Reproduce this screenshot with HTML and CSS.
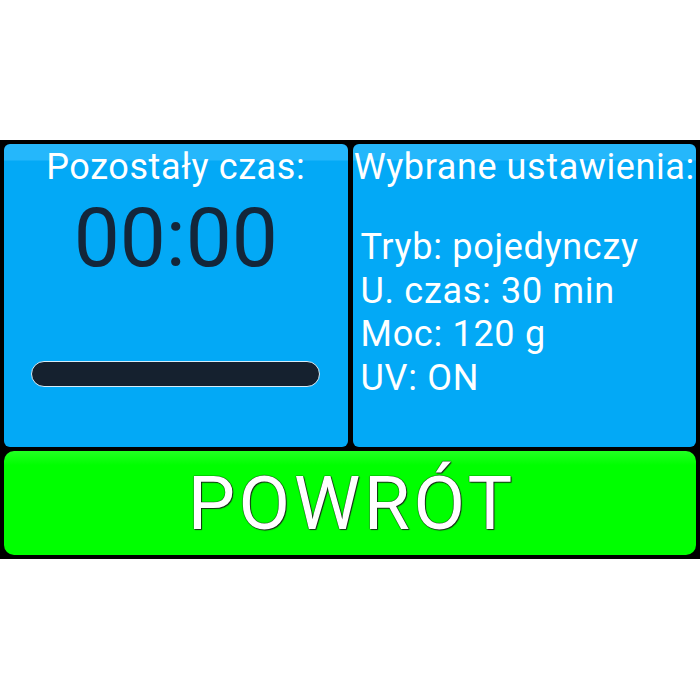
FILE: index.html
```html
<!DOCTYPE html>
<html lang="pl">
<head>
<meta charset="utf-8">
<title>Pozostały czas</title>
<link rel="stylesheet" href="styles.css">
</head>
<body>
<div class="screen">
  <div class="panels">
    <section class="panel panel-timer">
      <div class="panel-title">Pozostały czas:</div>
      <div class="timer">00:00</div>
      <div class="progress"><div class="progress-fill"></div></div>
    </section>
    <section class="panel panel-settings">
      <div class="panel-title">Wybrane ustawienia:</div>
      <ul class="settings">
        <li>Tryb: pojedynczy</li>
        <li>U. czas: 30 min</li>
        <li>Moc: 120 g</li>
        <li>UV: ON</li>
      </ul>
    </section>
  </div>
  <button class="back-btn">POWRÓT</button>
</div>
</body>
</html>
```

FILE: styles.css
```css
html, body {
  margin: 0;
  padding: 0;
  background: #ffffff;
}

body {
  font-family: Roboto, "Liberation Sans", sans-serif;
}

.screen {
  margin-top: 140px;
  width: 700px;
  height: 419px;
  box-sizing: border-box;
  background: #000000;
  padding: 4px;
  display: flex;
  flex-direction: column;
  gap: 4px;
}

.panels {
  display: flex;
  gap: 5px;
  height: 303px;
}

.panel {
  flex: 1;
  border-radius: 6px;
  background: linear-gradient(#25b7fb 0, #25b7fb 16px, #03a9f6 17px, #03a9f6 100%);
  color: #ffffff;
  display: flex;
  flex-direction: column;
  overflow: hidden;
}

.panel-title {
  font-size: 36px;
  letter-spacing: 0.6px;
  line-height: 40px;
  text-align: center;
  white-space: nowrap;
  margin-top: 3px;
}

.timer {
  font-size: 82px;
  line-height: 80px;
  color: #13263a;
  text-align: center;
  margin-top: 11px;
}

.progress {
  margin: 83px auto 0 auto;
  width: 289px;
  height: 26px;
  box-sizing: border-box;
  border: 1.5px solid #d6ecf8;
  border-radius: 13px;
  background: #15212f;
  overflow: hidden;
}

.progress-fill {
  width: 0;
  height: 100%;
}

.settings {
  list-style: none;
  margin: 39px 0 0 0;
  padding: 0 0 0 8px;
  font-size: 36px;
  letter-spacing: 0.7px;
  line-height: 43.5px;
}

.back-btn {
  height: 104px;
  width: 100%;
  border: none;
  border-radius: 10px;
  background: linear-gradient(#22ff22 0, #00ff00 14px, #00ff00 100%);
  color: #ffffff;
  font-family: Roboto, "Liberation Sans", sans-serif;
  font-size: 75px;
  letter-spacing: 3.5px;
  padding: 0 0 0 3.5px;
  text-shadow: 0 0 1px #000, 0 0 1px #000, 1px 1px 1px #1a3a1a;
  cursor: pointer;
}
```
